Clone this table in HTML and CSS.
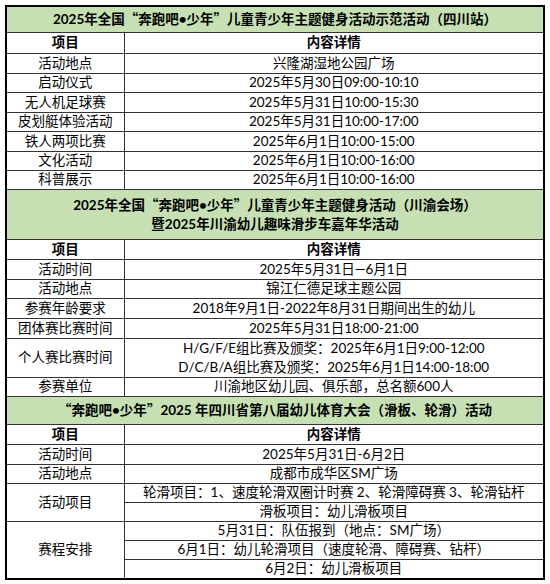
FILE: index.html
```html
<!DOCTYPE html>
<html lang="zh">
<head>
<meta charset="utf-8">
<link rel="stylesheet" href="styles.css">
</head>
<body>
<table class="sheet">
  <colgroup><col class="c1"><col class="c2"></colgroup>
  <tr class="title h26"><td colspan="2">2025年全国<span class="q">“</span>奔跑吧•少年<span class="q">”</span>儿童青少年主题健身活动示范活动（四川站）</td></tr>
  <tr class="head h21"><td>项目</td><td>内容详情</td></tr>
  <tr class="h20"><td>活动地点</td><td>兴隆湖湿地公园广场</td></tr>
  <tr class="h19"><td>启动仪式</td><td>2025年5月30日09:00-10:10</td></tr>
  <tr class="h20"><td>无人机足球赛</td><td>2025年5月31日10:00-15:30</td></tr>
  <tr class="h19"><td>皮划艇体验活动</td><td>2025年5月31日10:00-17:00</td></tr>
  <tr class="h20"><td>铁人两项比赛</td><td>2025年6月1日10:00-15:00</td></tr>
  <tr class="h19"><td>文化活动</td><td>2025年6月1日10:00-16:00</td></tr>
  <tr class="h19"><td>科普展示</td><td>2025年6月1日10:00-16:00</td></tr>

  <tr class="title two h50"><td colspan="2">2025年全国<span class="q">“</span>奔跑吧•少年<span class="q">”</span>儿童青少年主题健身活动（川渝会场）<br>暨2025年川渝幼儿趣味滑步车嘉年华活动</td></tr>
  <tr class="head h20"><td>项目</td><td>内容详情</td></tr>
  <tr class="h20"><td>活动时间</td><td>2025年5月31日—6月1日</td></tr>
  <tr class="h19"><td>活动地点</td><td>锦江仁德足球主题公园</td></tr>
  <tr class="h20"><td>参赛年龄要求</td><td>2018年9月1日-2022年8月31日期间出生的幼儿</td></tr>
  <tr class="h20"><td>团体赛比赛时间</td><td>2025年5月31日18:00-21:00</td></tr>
  <tr class="h39 two"><td>个人赛比赛时间</td><td>H/G/F/E组比赛及颁奖：2025年6月1日9:00-12:00<br>D/C/B/A组比赛及颁奖：2025年6月1日14:00-18:00</td></tr>
  <tr class="h19"><td>参赛单位</td><td>川渝地区幼儿园、俱乐部，总名额600人</td></tr>

  <tr class="title h28"><td colspan="2"><span class="q">“</span>奔跑吧•少年<span class="q">”</span>2025 年四川省第八届幼儿体育大会（滑板、轮滑）活动</td></tr>
  <tr class="head h20"><td>项目</td><td>内容详情</td></tr>
  <tr class="h20"><td>活动时间</td><td>2025年5月31日-6月2日</td></tr>
  <tr class="h19"><td>活动地点</td><td>成都市成华区SM广场</td></tr>
  <tr class="h19"><td rowspan="2">活动项目</td><td>轮滑项目：1、速度轮滑双圈计时赛 2、轮滑障碍赛 3、轮滑钻杆</td></tr>
  <tr class="h19"><td>滑板项目：幼儿滑板项目</td></tr>
  <tr class="h19"><td rowspan="3">赛程安排</td><td>5月31日：队伍报到（地点：SM广场）</td></tr>
  <tr class="h19"><td>6月1日：幼儿轮滑项目（速度轮滑、障碍赛、钻杆）</td></tr>
  <tr class="h20"><td>6月2日：幼儿滑板项目</td></tr>
</table>
</body>
</html>
```

FILE: styles.css
```css
html, body {
  margin: 0;
  padding: 0;
  background: #ffffff;
}
body {
  padding: 5px 0 0 5px;
  font-family: Lato, "Noto Sans CJK SC", sans-serif;
  font-size: 13.5px;
  color: #000;
}
.sheet {
  border-collapse: collapse;
  table-layout: fixed;
  width: 538px;
  border: 2px solid #000;
}
.c1 { width: 118px; }
.c2 { width: 420px; }
.sheet td {
  border: 1px solid #333;
  padding: 0;
  text-align: center;
  vertical-align: middle;
  line-height: 15px;
  white-space: nowrap;
  overflow: hidden;
}
.two td {
  line-height: 19px;
}
.title td {
  background: #c6e0b4;
  font-weight: bold;
}
.head td {
  font-weight: bold;
}
.q {
  font-family: "Noto Sans CJK SC", sans-serif;
}
.h19 { height: 19px; }
.h20 { height: 20px; }
.h21 { height: 21px; }
.h26 { height: 26px; }
.h28 { height: 28px; }
.h39 { height: 39px; }
.h50 { height: 50px; }
```
